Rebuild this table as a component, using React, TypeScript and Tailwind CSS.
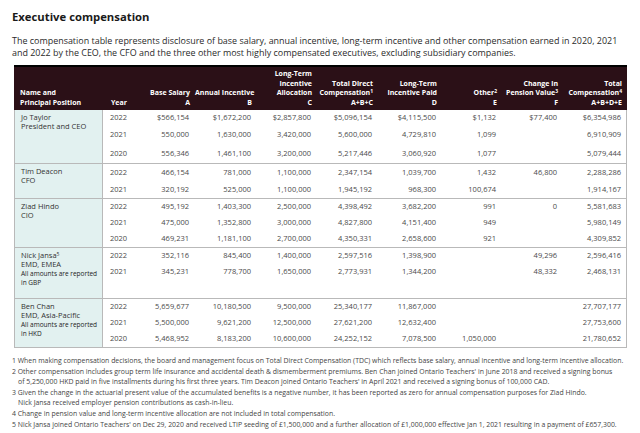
import React from "react";

const valueWidths = [
	"w-[52px]",
	"w-[62px]",
	"w-[60px]",
	"w-[61px]",
	"w-[64px]",
	"w-[60px]",
	"w-[61px]",
	"w-[64px]",
];

type Group = {
	name: React.ReactNode;
	rows: { year: string; h: string; values: string[] }[];
	extra?: string;
};

const groups: Group[] = [
	{
		name: (
			<>
				<div>Jo Taylor</div>
				<div>President and CEO</div>
			</>
		),
		rows: [
			{ year: "2022", h: "h-[15px]", values: ["$566,154", "$1,672,200", "$2,857,800", "$5,096,154", "$4,115,500", "$1,132", "$77,400", "$6,354,986"] },
			{ year: "2021", h: "h-[20px]", values: ["550,000", "1,630,000", "3,420,000", "5,600,000", "4,729,810", "1,099", "", "6,910,909"] },
			{ year: "2020", h: "h-[18px]", values: ["556,346", "1,461,100", "3,200,000", "5,217,446", "3,060,920", "1,077", "", "5,079,444"] },
		],
	},
	{
		name: (
			<>
				<div>Tim Deacon</div>
				<div>CFO</div>
			</>
		),
		rows: [
			{ year: "2022", h: "h-[17px]", values: ["466,154", "781,000", "1,100,000", "2,347,154", "1,039,700", "1,432", "46,800", "2,288,286"] },
			{ year: "2021", h: "h-[17px]", values: ["320,192", "525,000", "1,100,000", "1,945,192", "968,300", "100,674", "", "1,914,167"] },
		],
	},
	{
		name: (
			<>
				<div>Ziad Hindo</div>
				<div>CIO</div>
			</>
		),
		rows: [
			{ year: "2022", h: "h-[16px]", values: ["495,192", "1,403,300", "2,500,000", "4,398,492", "3,682,200", "991", "0", "5,581,683"] },
			{ year: "2021", h: "h-[16px]", values: ["475,000", "1,352,800", "3,000,000", "4,827,800", "4,151,400", "949", "", "5,980,149"] },
			{ year: "2020", h: "h-[16px]", values: ["469,231", "1,181,100", "2,700,000", "4,350,331", "2,658,600", "921", "", "4,309,852"] },
		],
	},
	{
		name: (
			<>
				<div>
					Nick Jansa<sup className="text-[5px]">5</sup>
				</div>
				<div>EMD, EMEA</div>
				<div className="text-[6.5px] leading-[9px] text-[#222]">
					All amounts are reported
					<br />
					in GBP
				</div>
			</>
		),
		rows: [
			{ year: "2022", h: "h-[16px]", values: ["352,116", "845,400", "1,400,000", "2,597,516", "1,398,900", "", "49,296", "2,596,416"] },
			{ year: "2021", h: "h-[16px]", values: ["345,231", "778,700", "1,650,000", "2,773,931", "1,344,200", "", "48,332", "2,468,131"] },
		],
		extra: "h-[18px]",
	},
	{
		name: (
			<>
				<div>Ben Chan</div>
				<div>EMD, Asia-Pacific</div>
				<div className="text-[6.5px] leading-[9px] text-[#222]">
					All amounts are reported
					<br />
					in HKD
				</div>
			</>
		),
		rows: [
			{ year: "2022", h: "h-[16px]", values: ["5,659,677", "10,180,500", "9,500,000", "25,340,177", "11,867,000", "", "", "27,707,177"] },
			{ year: "2021", h: "h-[16px]", values: ["5,500,000", "9,621,200", "12,500,000", "27,621,200", "12,632,400", "", "", "27,753,600"] },
			{ year: "2020", h: "h-[16px]", values: ["5,468,952", "8,183,200", "10,600,000", "24,252,152", "7,078,500", "1,050,000", "", "21,780,652"] },
		],
	},
];

const headers: React.ReactNode[] = [
	<>
		Base Salary
		<br />A
	</>,
	<>
		Annual Incentive
		<br />B
	</>,
	<>
		Long-Term
		<br />
		Incentive
		<br />
		Allocation
		<br />C
	</>,
	<>
		Total Direct
		<br />
		Compensation<sup className="text-[5px]">1</sup>
		<br />
		A+B+C
	</>,
	<>
		Long-Term
		<br />
		Incentive Paid
		<br />D
	</>,
	<>
		Other<sup className="text-[5px]">2</sup>
		<br />E
	</>,
	<>
		Change in
		<br />
		Pension Value<sup className="text-[5px]">3</sup>
		<br />F
	</>,
	<>
		Total
		<br />
		Compensation<sup className="text-[5px]">4</sup>
		<br />
		A+B+D+E
	</>,
];

export default function App() {
	return (
		<div className="w-[640px] h-[433px] bg-white overflow-hidden font-['Open_Sans',sans-serif] text-[#333]">
			{/* Heading and intro */}
			<div className="pl-[12px] pt-[10px]">
				<h1 className="text-[11.3px] leading-[14px] font-bold text-[#1a1a1a]">Executive compensation</h1>
				<p className="mt-[11px] text-[8.95px] leading-[12px] whitespace-nowrap text-[#2a2a2a]">
					The compensation table represents disclosure of base salary, annual incentive, long-term incentive and other compensation earned in 2020, 2021
					<br />
					and 2022 by the CEO, the CFO and the three other most highly compensated executives, excluding subsidiary companies.
				</p>
			</div>

			{/* Table */}
			<div className="ml-[14px] mt-[6px] w-[613px]">
				<div className="flex items-end h-[45px] bg-[#2b1017] border-t-2 border-black pb-[3px] text-white font-bold text-[7px] leading-[9.5px] whitespace-nowrap">
					<div className="w-[89px] pl-[6px]">
						Name and
						<br />
						Principal Position
					</div>
					<div className="w-[40px] pl-[8px]">Year</div>
					{headers.map((h, i) => (
						<div key={i} className={`${valueWidths[i]} pr-[5px] text-right`}>
							{h}
						</div>
					))}
				</div>

				{groups.map((g, gi) => (
					<div key={gi} className="flex border-b border-[#b9b9b9]">
						<div className="w-[89px] shrink-0 bg-[#e2f1f0] border-l border-r border-[#b9b9b9] pl-[6px] pt-[3px] text-[7.5px] leading-[9px] text-[#333]">
							{g.name}
						</div>
						<div className="flex flex-col border-r border-[#b9b9b9] text-[7.5px] text-[#4a4a4a]">
							{g.rows.map((r) => (
								<div key={r.year} className={`flex items-center ${r.h}`}>
									<div className="w-[39px] pl-[7px]">{r.year}</div>
									{r.values.map((v, vi) => (
										<div key={vi} className={`${valueWidths[vi]} pr-[5px] text-right`}>
											{v}
										</div>
									))}
								</div>
							))}
							{g.extra && <div className={g.extra} />}
						</div>
					</div>
				))}
			</div>

			{/* Footnotes */}
			<div className="pl-[12px] mt-[8px] text-[6.9px] leading-[10px] text-[#444] whitespace-nowrap flex flex-col gap-[1px]">
				<div>1 When making compensation decisions, the board and management focus on Total Direct Compensation (TDC) which reflects base salary, annual incentive and long-term incentive allocation.</div>
				<div>
					2 Other compensation includes group term life insurance and accidental death &amp; dismemberment premiums. Ben Chan joined Ontario Teachers' in June 2018 and received a signing bonus
					<br />
					<span className="pl-[6px]">of 5,250,000 HKD paid in five installments during his first three years. Tim Deacon joined Ontario Teachers' in April 2021 and received a signing bonus of 100,000 CAD.</span>
				</div>
				<div>
					3 Given the change in the actuarial present value of the accumulated benefits is a negative number, it has been reported as zero for annual compensation purposes for Ziad Hindo.
					<br />
					<span className="pl-[6px]">Nick Jansa received employer pension contributions as cash-in-lieu.</span>
				</div>
				<div>4 Change in pension value and long-term incentive allocation are not included in total compensation.</div>
				<div>5 Nick Jansa joined Ontario Teachers' on Dec 29, 2020 and received LTIP seeding of £1,500,000 and a further allocation of £1,000,000 effective Jan 1, 2021 resulting in a payment of £657,300.</div>
			</div>
		</div>
	);
}
